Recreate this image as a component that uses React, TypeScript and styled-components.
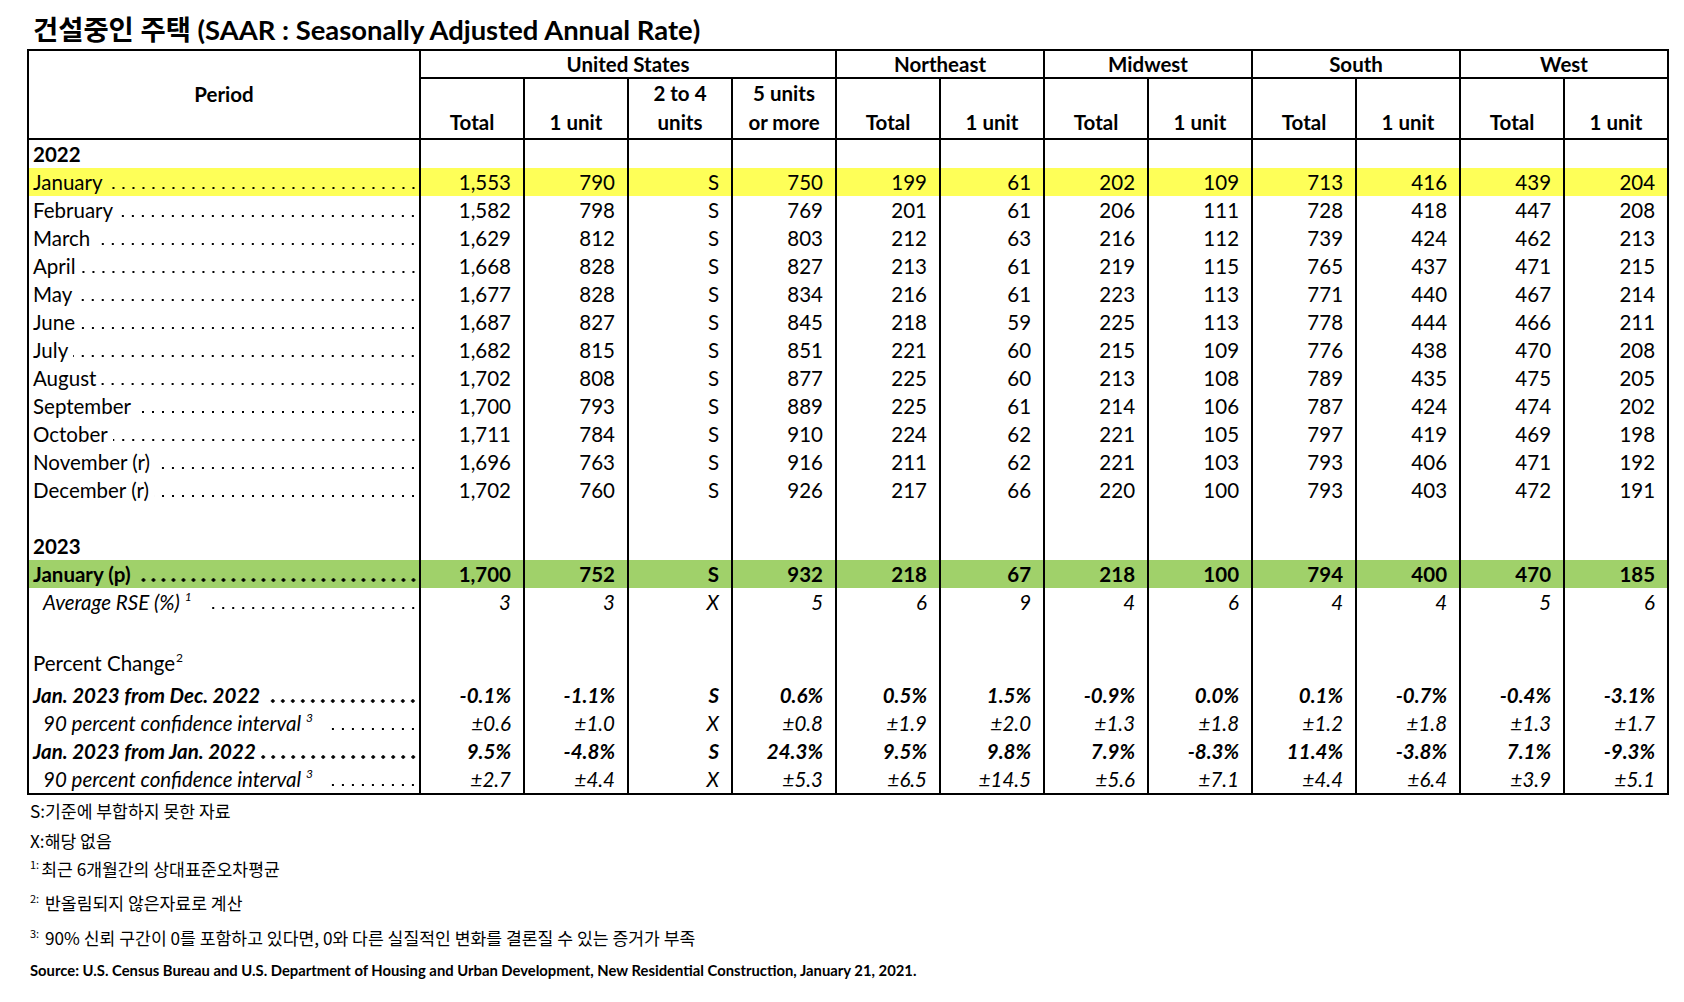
import React from 'react';
import styled, { createGlobalStyle, css } from 'styled-components';

const GlobalStyle = createGlobalStyle`
  html, body { margin: 0; padding: 0; background: #fff; }
  body { font-family: Lato, "Noto Sans CJK KR", sans-serif; color: #000; }
`;

const YELLOW = '#feff58';
const GREEN = '#a0d16a';

const Page = styled.div`
  width: 1684px;
  height: 1002px;
  box-sizing: border-box;
  padding-left: 27px;
  overflow: hidden;
`;

const Title = styled.h1`
  margin: 0;
  padding: 13px 0 2px 6px;
  font-size: 27.4px;
  line-height: 34px;
  font-weight: 700;
  white-space: nowrap;
`;

const Table = styled.table`
  border-collapse: collapse;
  table-layout: fixed;
  width: 1640px;
  border: 2px solid #000;
  font-size: 20.5px;
`;

const GroupHead = styled.th`
  border: 2px solid #000;
  height: 26px;
  padding: 0;
  font-weight: 700;
  text-align: center;
  vertical-align: middle;
  line-height: 26px;
  white-space: nowrap;
`;

const PeriodHead = styled(GroupHead)`
  padding-bottom: 2px;
`;

const SubHead = styled.th`
  border: 2px solid #000;
  height: 50px;
  padding: 0 0 1px;
  font-weight: 700;
  text-align: center;
  vertical-align: bottom;
  line-height: 29px;
  white-space: nowrap;
`;

type Kind = 'year' | 'plain' | 'strong' | 'rse' | 'blank' | 'section' | 'change' | 'ci';

const Row = styled.tr<{ $bg?: string }>`
  background: ${(p) => p.$bg ?? 'transparent'};
`;

const kindFont = (k: Kind) => {
  switch (k) {
    case 'year':
    case 'strong':
      return css`font-weight: 700; font-style: normal;`;
    case 'change':
      return css`font-weight: 700; font-style: italic;`;
    case 'rse':
    case 'ci':
      return css`font-weight: 400; font-style: italic;`;
    default:
      return css`font-weight: 400; font-style: normal;`;
  }
};

const LabelCell = styled.td<{ $kind: Kind; $indent?: boolean }>`
  border-left: 2px solid #000;
  border-right: 2px solid #000;
  height: ${(p) => (p.$kind === 'section' ? 37 : 28)}px;
  padding: 0 0 ${(p) => (p.$kind === 'section' ? 4 : 0)}px ${(p) => (p.$indent ? 14 : 4)}px;
  box-sizing: border-box;
  line-height: 28px;
  vertical-align: ${(p) => (p.$kind === 'section' ? 'bottom' : 'middle')};
  white-space: nowrap;
  overflow: hidden;
  ${(p) => kindFont(p.$kind)}
`;

const LabelWrap = styled.div`
  display: flex;
  align-items: baseline;
`;

const LabelText = styled.span`
  flex: 0 0 auto;
`;

const Leader = styled.span<{ $bold?: boolean; $gap: number }>`
  flex: 1 1 auto;
  min-width: 0;
  height: 4px;
  margin-left: ${(p) => p.$gap}px;
  margin-right: 1px;
  background-image: radial-gradient(
    circle,
    #000 0 ${(p) => (p.$bold ? 1.5 : 1.05)}px,
    transparent ${(p) => (p.$bold ? 1.9 : 1.45)}px
  );
  background-size: 10px 4px;
  background-repeat: repeat-x;
  background-position: right bottom;
`;

const Sup = styled.sup<{ $italic?: boolean }>`
  font-size: 12px;
  line-height: 0;
  vertical-align: 9px;
  margin-left: ${(p) => (p.$italic ? 5 : 1)}px;
  font-style: ${(p) => (p.$italic ? 'italic' : 'normal')};
  font-weight: 400;
`;

const Cell = styled.td<{ $kind: Kind }>`
  border-left: 2px solid #000;
  border-right: 2px solid #000;
  padding: 0 12px 0 4px;
  text-align: right;
  line-height: 28px;
  white-space: nowrap;
  ${(p) => kindFont(p.$kind)}
`;

const Notes = styled.div`
  padding-left: 3px;
  font-family: "Noto Sans CJK KR", Lato, sans-serif;
  font-size: 17.2px;
`;

const Note = styled.p<{ $mt: number }>`
  margin: ${(p) => p.$mt}px 0 0;
  height: 28px;
  line-height: 28px;
  white-space: nowrap;
`;

const NoteSup = styled.sup`
  font-size: 11px;
  line-height: 0;
  vertical-align: 7px;
  margin-right: 2px;
`;

const Source = styled.p`
  margin: 4px 0 0;
  height: 28px;
  line-height: 28px;
  font-family: Lato, sans-serif;
  font-weight: 700;
  font-size: 14.8px;
  white-space: nowrap;
`;

type RowDef = {
  label?: string;
  kind: Kind;
  vals?: string[];
  bg?: string;
  indent?: boolean;
  sup?: string;
  supItalic?: boolean;
  leader?: boolean;
};

const rows: RowDef[] = [
  { label: '2022', kind: 'year' },
  { label: 'January', kind: 'plain', bg: YELLOW, leader: true, vals: ['1,553', '790', 'S', '750', '199', '61', '202', '109', '713', '416', '439', '204'] },
  { label: 'February', kind: 'plain', leader: true, vals: ['1,582', '798', 'S', '769', '201', '61', '206', '111', '728', '418', '447', '208'] },
  { label: 'March', kind: 'plain', leader: true, vals: ['1,629', '812', 'S', '803', '212', '63', '216', '112', '739', '424', '462', '213'] },
  { label: 'April', kind: 'plain', leader: true, vals: ['1,668', '828', 'S', '827', '213', '61', '219', '115', '765', '437', '471', '215'] },
  { label: 'May', kind: 'plain', leader: true, vals: ['1,677', '828', 'S', '834', '216', '61', '223', '113', '771', '440', '467', '214'] },
  { label: 'June', kind: 'plain', leader: true, vals: ['1,687', '827', 'S', '845', '218', '59', '225', '113', '778', '444', '466', '211'] },
  { label: 'July', kind: 'plain', leader: true, vals: ['1,682', '815', 'S', '851', '221', '60', '215', '109', '776', '438', '470', '208'] },
  { label: 'August', kind: 'plain', leader: true, vals: ['1,702', '808', 'S', '877', '225', '60', '213', '108', '789', '435', '475', '205'] },
  { label: 'September', kind: 'plain', leader: true, vals: ['1,700', '793', 'S', '889', '225', '61', '214', '106', '787', '424', '474', '202'] },
  { label: 'October', kind: 'plain', leader: true, vals: ['1,711', '784', 'S', '910', '224', '62', '221', '105', '797', '419', '469', '198'] },
  { label: 'November (r)', kind: 'plain', leader: true, vals: ['1,696', '763', 'S', '916', '211', '62', '221', '103', '793', '406', '471', '192'] },
  { label: 'December (r)', kind: 'plain', leader: true, vals: ['1,702', '760', 'S', '926', '217', '66', '220', '100', '793', '403', '472', '191'] },
  { kind: 'blank' },
  { label: '2023', kind: 'year' },
  { label: 'January (p)', kind: 'strong', bg: GREEN, leader: true, vals: ['1,700', '752', 'S', '932', '218', '67', '218', '100', '794', '400', '470', '185'] },
  { label: 'Average RSE (%)', kind: 'rse', indent: true, sup: '1', supItalic: true, leader: true, vals: ['3', '3', 'X', '5', '6', '9', '4', '6', '4', '4', '5', '6'] },
  { kind: 'blank' },
  { label: 'Percent Change', kind: 'section', sup: '2' },
  { label: 'Jan. 2023 from Dec. 2022', kind: 'change', leader: true, vals: ['-0.1%', '-1.1%', 'S', '0.6%', '0.5%', '1.5%', '-0.9%', '0.0%', '0.1%', '-0.7%', '-0.4%', '-3.1%'] },
  { label: '90 percent confidence interval', kind: 'ci', indent: true, sup: '3', supItalic: true, leader: true, vals: ['±0.6', '±1.0', 'X', '±0.8', '±1.9', '±2.0', '±1.3', '±1.8', '±1.2', '±1.8', '±1.3', '±1.7'] },
  { label: 'Jan. 2023 from Jan. 2022', kind: 'change', leader: true, vals: ['9.5%', '-4.8%', 'S', '24.3%', '9.5%', '9.8%', '7.9%', '-8.3%', '11.4%', '-3.8%', '7.1%', '-9.3%'] },
  { label: '90 percent confidence interval', kind: 'ci', indent: true, sup: '3', supItalic: true, leader: true, vals: ['±2.7', '±4.4', 'X', '±5.3', '±6.5', '±14.5', '±5.6', '±7.1', '±4.4', '±6.4', '±3.9', '±5.1'] },
];

const groups = ['United States', 'Northeast', 'Midwest', 'South', 'West'];
const subHeads: React.ReactNode[] = [
  'Total',
  '1 unit',
  <>2 to 4<br />units</>,
  <>5 units<br />or more</>,
  'Total', '1 unit', 'Total', '1 unit', 'Total', '1 unit', 'Total', '1 unit',
];

export default function App() {
  return (
    <Page>
      <GlobalStyle />
      <Title>건설중인 주택 (SAAR : Seasonally Adjusted Annual Rate)</Title>
      <Table>
        <colgroup>
          <col style={{ width: 392 }} />
          {Array.from({ length: 12 }).map((_, i) => (
            <col key={i} style={{ width: 104 }} />
          ))}
        </colgroup>
        <thead>
          <tr>
            <PeriodHead rowSpan={2}>Period</PeriodHead>
            {groups.map((g, i) => (
              <GroupHead key={g} colSpan={i === 0 ? 4 : 2}>{g}</GroupHead>
            ))}
          </tr>
          <tr>
            {subHeads.map((h, i) => (
              <SubHead key={i}>{h}</SubHead>
            ))}
          </tr>
        </thead>
        <tbody>
          {rows.map((r, ri) => {
            const bold = r.kind === 'strong' || r.kind === 'change';
            return (
              <Row key={ri} $bg={r.bg}>
                <LabelCell $kind={r.kind} $indent={r.indent}>
                  {r.label ? (
                    <LabelWrap>
                      <LabelText>
                        {r.label}
                        {r.sup && <Sup $italic={r.supItalic}>{r.sup}</Sup>}
                      </LabelText>
                      {r.leader && <Leader $bold={bold} $gap={r.sup ? 14 : 5} />}
                    </LabelWrap>
                  ) : null}
                </LabelCell>
                {Array.from({ length: 12 }).map((_, ci) => (
                  <Cell key={ci} $kind={r.kind}>{r.vals ? r.vals[ci] : ''}</Cell>
                ))}
              </Row>
            );
          })}
        </tbody>
      </Table>
      <Notes>
        <Note $mt={2}>S:기준에 부합하지 못한 자료</Note>
        <Note $mt={2}>X:해당 없음</Note>
        <Note $mt={0}><NoteSup>1:</NoteSup>최근 6개월간의 상대표준오차평균</Note>
        <Note $mt={6}><NoteSup>2:</NoteSup> 반올림되지 않은자료로 계산</Note>
        <Note $mt={7}><NoteSup>3:</NoteSup> 90% 신뢰 구간이 0를 포함하고 있다면, 0와 다른 실질적인 변화를 결론질 수 있는 증거가 부족</Note>
        <Source>Source: U.S. Census Bureau and U.S. Department of Housing and Urban Development, New Residential Construction, January 21, 2021.</Source>
      </Notes>
    </Page>
  );
}
